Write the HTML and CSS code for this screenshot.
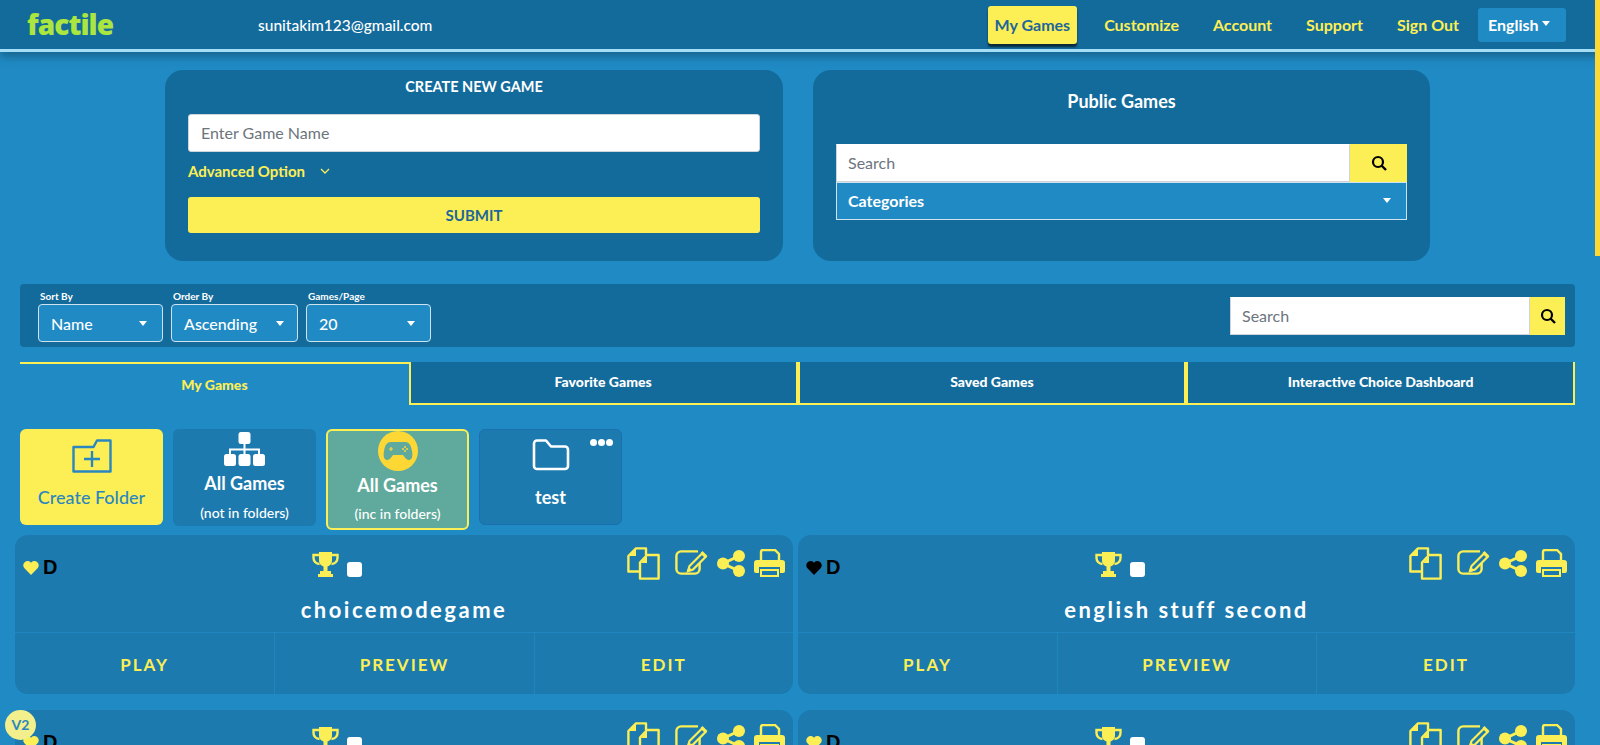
FILE: index.html
```html
<!DOCTYPE html>
<html lang="en">
<head>
    <meta charset="UTF-8">
    <meta name="viewport" content="width=device-width, initial-scale=1.0">
    <title>Factile - My Games</title>
    <link rel="stylesheet" href="styles.css">
</head>
<body>
    <svg class="icon-defs" aria-hidden="true">
        <symbol id="i-copy" viewBox="0 0 33 33">
            <path d="M19 8V1.400H9L1.400 9v15.500H12" fill="none" stroke="currentColor" stroke-width="2.400" stroke-linejoin="round"/>
            <path d="M9 2v7H2z" fill="currentColor"/>
            <path d="M31.600 8H20l-7 7.500v16.100h18.600z" fill="none" stroke="currentColor" stroke-width="2.400" stroke-linejoin="round"/>
            <path d="M20 9v7h-6z" fill="currentColor"/>
        </symbol>
        <symbol id="i-edit" viewBox="0 0 33 25">
            <path d="M23 1.400H6A4.600 4.600 0 0 0 1.400 6v13A4.600 4.600 0 0 0 6 23.600h14a4.600 4.600 0 0 0 4.600-4.600v-6" fill="none" stroke="currentColor" stroke-width="2.400"/>
            <path d="M27 3.500l3.500 3.500L18 19.500l-5 1.500 1.500-5z" fill="none" stroke="currentColor" stroke-width="2.200"/>
            <path d="M27.500 1l5 5-2 2-5-5zM12 22l1.500-5.500 4 4z" fill="currentColor"/>
        </symbol>
        <symbol id="i-share" viewBox="0 0 28 27">
            <circle cx="22" cy="6" r="6" fill="currentColor"/>
            <circle cx="6" cy="13.500" r="6" fill="currentColor"/>
            <circle cx="22" cy="21" r="6" fill="currentColor"/>
            <path d="M22 6L6 13.500 22 21" fill="none" stroke="currentColor" stroke-width="3"/>
        </symbol>
        <symbol id="i-print" viewBox="0 0 31 28">
            <path d="M7 13V3a2 2 0 0 1 2-2h12l4 4v8" fill="none" stroke="currentColor" stroke-width="2.400"/>
            <path d="M3 11h25a3 3 0 0 1 3 3v8a2 2 0 0 1-2 2h-3v-6H5v6H2a2 2 0 0 1-2-2v-8a3 3 0 0 1 3-3z" fill="currentColor"/>
            <path d="M7 21h17v6H7z" fill="none" stroke="currentColor" stroke-width="2"/>
        </symbol>
        <symbol id="i-trophy" viewBox="0 0 27 25">
            <path d="M7 0h13v8a6.500 6.500 0 0 1-4.500 6.500V19h3.500v3h2v3H6v-3h2v-3h3.500v-4.500A6.500 6.500 0 0 1 7 8z" fill="currentColor"/>
            <path d="M7 3H1.500v3a6 6 0 0 0 6 6M20 3h5.500v3a6 6 0 0 1-6 6" fill="none" stroke="currentColor" stroke-width="2.400"/>
        </symbol>
        <symbol id="i-heart" viewBox="0 0 16 15">
            <path d="M8 15L1.200 8A4.300 4.300 0 0 1 8 2.700 4.300 4.300 0 0 1 14.800 8z" fill="currentColor"/>
        </symbol>
        <symbol id="i-search" viewBox="0 0 16 16">
            <circle cx="7" cy="7" r="5" fill="none" stroke="currentColor" stroke-width="2.200"/>
            <path d="M10.500 10.500L15 15" stroke="currentColor" stroke-width="2.400"/>
        </symbol>
    </svg>

    <header class="navbar">
        <a class="logo">factile</a>
        <span class="nav-email">sunitakim123@gmail.com</span>
        <nav class="nav-links">
            <a class="nav-link active">My Games</a>
            <a class="nav-link">Customize</a>
            <a class="nav-link">Account</a>
            <a class="nav-link">Support</a>
            <a class="nav-link">Sign Out</a>
            <a class="lang-btn">English<span class="caret"></span></a>
        </nav>
    </header>

    <main class="content">
        <section class="top-panels">
            <div class="panel">
                <h2 class="panel-title create-title">CREATE NEW GAME</h2>
                <input class="game-name" type="text" placeholder="Enter Game Name">
                <div class="advanced">
                    <span>Advanced Option</span>
                    <svg width="10" height="6" viewBox="0 0 10 6"><path d="M1 1l4 4 4-4" fill="none" stroke="#fcef55" stroke-width="1.300"/></svg>
                </div>
                <button class="submit-btn">SUBMIT</button>
            </div>
            <div class="panel panel-right">
                <h2 class="panel-title public-title">Public Games</h2>
                <div class="search-row">
                    <input class="search-input" type="text" placeholder="Search">
                    <span class="search-btn"><svg width="16" height="16"><use href="#i-search"/></svg></span>
                </div>
                <div class="categories">Categories<span class="caret"></span></div>
            </div>
        </section>

        <section class="sort-bar">
            <div class="sort-field">
                <label class="sort-label">Sort By</label>
                <div class="sort-select w-name">Name<span class="caret"></span></div>
            </div>
            <div class="sort-field">
                <label class="sort-label">Order By</label>
                <div class="sort-select w-order">Ascending<span class="caret"></span></div>
            </div>
            <div class="sort-field">
                <label class="sort-label">Games/Page</label>
                <div class="sort-select w-name">20<span class="caret"></span></div>
            </div>
            <div class="search-row sort-search">
                <input class="search-input" type="text" placeholder="Search">
                <span class="search-btn small"><svg width="16" height="16"><use href="#i-search"/></svg></span>
            </div>
        </section>

        <section class="tabs">
            <div class="tab active">My Games</div>
            <div class="tab">Favorite Games</div>
            <div class="tab">Saved Games</div>
            <div class="tab">Interactive Choice Dashboard</div>
        </section>

        <section class="folders">
            <div class="folder create">
                <svg class="folder-icon" width="40" height="34" viewBox="0 0 40 34">
                    <path d="M1.500 8h20l3.500-6.500h13.500v31h-37z" fill="none" stroke="currentColor" stroke-width="2.400" stroke-linejoin="round"/>
                    <path d="M20 12v16M12 20h16" stroke="currentColor" stroke-width="2.400"/>
                </svg>
                <div class="folder-name">Create Folder</div>
            </div>
            <div class="folder">
                <svg class="tree-icon" width="41" height="34" viewBox="0 0 41 34">
                    <rect x="14.500" y="0" width="12" height="12" rx="2.500" fill="#fff"/>
                    <rect x="0" y="22" width="12" height="12" rx="2.500" fill="#fff"/>
                    <rect x="14.500" y="22" width="12" height="12" rx="2.500" fill="#fff"/>
                    <rect x="29" y="22" width="12" height="12" rx="2.500" fill="#fff"/>
                    <path d="M20.500 12v10M6 22v-4.500h29V22" fill="none" stroke="#fff" stroke-width="2"/>
                </svg>
                <div class="folder-name">All Games</div>
                <div class="folder-sub">(not in folders)</div>
            </div>
            <div class="folder selected">
                <span class="pad-badge">
                    <svg width="30" height="20" viewBox="0 0 30 20">
                        <path d="M8 1h14c4 0 6 3 7 9 1 5 0 9-3 9-2 0-4-2-6-5H10c-2 3-4 5-6 5-3 0-4-4-3-9C2 4 4 1 8 1z" fill="#5faa9c"/>
                        <path d="M6 8h4M8 6v4" stroke="#fdd835" stroke-width="1.200"/>
                        <circle cx="22" cy="6" r="1" fill="#fdd835"/><circle cx="22" cy="10" r="1" fill="#fdd835"/>
                        <circle cx="20" cy="8" r="1" fill="#fdd835"/><circle cx="24" cy="8" r="1" fill="#fdd835"/>
                    </svg>
                </span>
                <div class="folder-name">All Games</div>
                <div class="folder-sub">(inc in folders)</div>
            </div>
            <div class="folder plain">
                <span class="more-dots"><i></i><i></i><i></i></span>
                <svg class="folder-outline" width="38" height="32" viewBox="0 0 38 32">
                    <path d="M5 1.500h9l5 6h14a3 3 0 0 1 3 3V27a3 3 0 0 1-3 3H5a3 3 0 0 1-3-3V4.500a3 3 0 0 1 3-3z" fill="none" stroke="#fff" stroke-width="2.600" stroke-linejoin="round"/>
                </svg>
                <div class="folder-name">test</div>
            </div>
        </section>

        <section class="games">
            <article class="game">
                <div class="game-top">
                    <div class="game-fav"><svg class="heart on" width="16" height="15"><use href="#i-heart"/></svg><b>D</b></div>
                    <div class="game-mid"><svg width="27" height="25"><use href="#i-trophy"/></svg><span class="check"></span></div>
                    <div class="game-tools">
                        <svg class="t-copy" width="33" height="33"><use href="#i-copy"/></svg>
                        <svg class="t-edit" width="33" height="25"><use href="#i-edit"/></svg>
                        <svg class="t-share" width="28" height="27"><use href="#i-share"/></svg>
                        <svg class="t-print" width="31" height="28"><use href="#i-print"/></svg>
                    </div>
                </div>
                <h3 class="game-title">choicemodegame</h3>
                <div class="game-actions"><a>PLAY</a><a>PREVIEW</a><a>EDIT</a></div>
            </article>
            <article class="game">
                <div class="game-top">
                    <div class="game-fav"><svg class="heart" width="16" height="15"><use href="#i-heart"/></svg><b>D</b></div>
                    <div class="game-mid"><svg width="27" height="25"><use href="#i-trophy"/></svg><span class="check"></span></div>
                    <div class="game-tools">
                        <svg class="t-copy" width="33" height="33"><use href="#i-copy"/></svg>
                        <svg class="t-edit" width="33" height="25"><use href="#i-edit"/></svg>
                        <svg class="t-share" width="28" height="27"><use href="#i-share"/></svg>
                        <svg class="t-print" width="31" height="28"><use href="#i-print"/></svg>
                    </div>
                </div>
                <h3 class="game-title">english stuff second</h3>
                <div class="game-actions"><a>PLAY</a><a>PREVIEW</a><a>EDIT</a></div>
            </article>
            <article class="game">
                <div class="game-top">
                    <div class="game-fav"><svg class="heart on" width="16" height="15"><use href="#i-heart"/></svg><b>D</b></div>
                    <div class="game-mid"><svg width="27" height="25"><use href="#i-trophy"/></svg><span class="check"></span></div>
                    <div class="game-tools">
                        <svg class="t-copy" width="33" height="33"><use href="#i-copy"/></svg>
                        <svg class="t-edit" width="33" height="25"><use href="#i-edit"/></svg>
                        <svg class="t-share" width="28" height="27"><use href="#i-share"/></svg>
                        <svg class="t-print" width="31" height="28"><use href="#i-print"/></svg>
                    </div>
                </div>
            </article>
            <article class="game">
                <div class="game-top">
                    <div class="game-fav"><svg class="heart on" width="16" height="15"><use href="#i-heart"/></svg><b>D</b></div>
                    <div class="game-mid"><svg width="27" height="25"><use href="#i-trophy"/></svg><span class="check"></span></div>
                    <div class="game-tools">
                        <svg class="t-copy" width="33" height="33"><use href="#i-copy"/></svg>
                        <svg class="t-edit" width="33" height="25"><use href="#i-edit"/></svg>
                        <svg class="t-share" width="28" height="27"><use href="#i-share"/></svg>
                        <svg class="t-print" width="31" height="28"><use href="#i-print"/></svg>
                    </div>
                </div>
            </article>
        </section>
    </main>

    <div class="version">V2</div>
    <div class="scroll-thumb"></div>
</body>
</html>
```

FILE: styles.css
```css
* { box-sizing: border-box; }
html, body { height: 100%; overflow: hidden; }
body { margin: 0; background: #208ac4; color: #fff; font-family: Lato, "Open Sans", sans-serif; font-size: 15px; }
a { text-decoration: none; }
.icon-defs { position: absolute; width: 0; height: 0; }

.caret { display: inline-block; width: 0; height: 0; border-left: 4px solid transparent; border-right: 4px solid transparent; border-top: 5px solid #fff; }

/* navbar */
.navbar { display: flex; align-items: center; height: 52px; padding-right: 34px; background: #136b9b; border-bottom: 3px solid #a5dff7; box-shadow: 0 5px 8px rgba(19, 80, 110, 0.6); position: relative; }
.logo { width: 258px; padding-left: 27px; color: #abe53f; font-family: "Open Sans", sans-serif; font-size: 28px; font-weight: 800; line-height: 49px; letter-spacing: -0.9px; }
.nav-email { font-size: 15.5px; font-weight: 500; }
.nav-links { display: flex; align-items: center; margin-left: auto; }
.nav-link { padding: 0 7px; margin-right: 20px; height: 38px; line-height: 38px; color: #fcef55; font-size: 16px; font-weight: 700; border-radius: 3px; }
.nav-link.active { background: #fcef55; color: #1d669c; box-shadow: 0 3px 2px #0a2a3a; }
.lang-btn { display: flex; align-items: center; gap: 3px; width: 88px; height: 34px; padding-left: 10px; background: #208ac4; color: #fff; font-size: 16px; font-weight: 700; border-radius: 3px; margin-left: -8px; }
.lang-btn .caret { margin-top: -3px; }

/* main column leaves room for the scroll thumb */
.content { width: 1595px; }

.top-panels { display: flex; justify-content: center; gap: 30px; padding-top: 18px; }
.panel { width: 618px; height: 191px; padding: 0 23px; background: #136b9b; border-radius: 18px; }
.panel-right { width: 617px; }
.panel-title { margin: 0; text-align: center; font-weight: 700; }
.create-title { padding-top: 8px; font-size: 14.5px; line-height: 18px; }
.public-title { padding-top: 21px; padding-bottom: 33px; font-size: 18px; line-height: 20px; }
.game-name { display: block; width: 100%; height: 38px; margin-top: 18px; padding: 0 12px 2px; border: 1px solid #ced4da; border-radius: 3px; font: 16px Lato, sans-serif; background: #fff; }
input::placeholder { color: #6c757d; opacity: 1; }
.advanced { display: flex; align-items: center; gap: 15px; height: 20px; margin-top: 9px; color: #fcef55; font-weight: 700; }
.submit-btn { display: block; width: 100%; height: 36px; margin-top: 16px; border: 0; border-radius: 3px; background: #fcef55; color: #1d669c; font: 700 15px Lato, sans-serif; }

.search-row { display: flex; height: 38px; }
.search-input { flex: 1; min-width: 0; padding: 0 11px 2px; border: 1px solid #ced4da; border-top-color: #fff; background: #fff; font: 16px Lato, sans-serif; }
.search-btn { display: flex; align-items: center; justify-content: center; width: 57px; background: #fcef55; color: #000; }
.search-btn.small { width: 35px; }
.categories { display: flex; align-items: center; justify-content: space-between; height: 38px; padding: 0 15px 2px 11px; border: 1px solid #cfe3ef; background: #208ac4; font-size: 16px; font-weight: 700; }

.sort-bar { display: flex; align-items: flex-end; gap: 8px; height: 63px; margin: 23px 20px 0; padding: 0 10px 5px 18px; background: #136b9b; border-radius: 4px; }
.sort-label { display: block; height: 12px; margin-left: 2px; font-size: 10px; line-height: 11px; font-weight: 700; }
.sort-select { display: flex; align-items: center; justify-content: space-between; height: 38px; padding: 0 15px 0 12px; margin-top: 1px; background: #208ac4; border: 1px solid #cfe3ef; border-radius: 4px; font-size: 16px; font-weight: 500; }
.w-name { width: 125px; }
.w-order { width: 127px; padding-right: 13px; }
.sort-search { width: 335px; margin-left: auto; margin-bottom: 7px; }

.tabs { display: grid; grid-template-columns: repeat(4, 1fr); height: 43px; margin: 15px 20px 0; }
.tab { display: flex; align-items: center; justify-content: center; padding-bottom: 2px; background: #136b9b; border-left: 2px solid #fcef55; border-right: 2px solid #fcef55; border-bottom: 2px solid #fcef55; font-size: 14px; font-weight: 900; }
.tab.active { background: transparent; color: #fcef55; border: 0; border-top: 2px solid #fcef55; padding: 0; }

.folders { display: flex; gap: 10px; align-items: flex-start; margin: 24px 20px 0; }
.folder { position: relative; display: flex; flex-direction: column; align-items: center; width: 143px; height: 97px; padding-top: 3px; background: #1c7aae; border-radius: 6px; }
.folder.create { background: #fcef55; color: #2a86c0; height: 96px; padding-top: 10px; }
.folder.selected { height: 101px; padding-top: 0; background: #5faa9c; border: 2px solid #fcef55; }
.folder.plain { height: 96px; padding-top: 9px; border: 1px solid #1b6fb0; }
.folder-name { font-size: 18px; font-weight: 700; line-height: 20px; }
.create .folder-name { margin-top: 14px; font-weight: 500; }
.tree-icon { margin-bottom: 7px; }
.folder-sub { margin-top: 11px; font-size: 14px; font-weight: 500; line-height: 17px; }
.selected .folder-sub { margin-top: 10px; }
.pad-badge { display: flex; align-items: center; justify-content: center; width: 40px; height: 40px; margin-bottom: 4px; border-radius: 50%; background: #fdd835; }
.more-dots { position: absolute; top: 9px; right: 8px; display: flex; gap: 1px; }
.more-dots i { width: 7px; height: 7px; border-radius: 50%; background: #fff; }
.plain .folder-name { margin-top: 16px; }

.games { display: grid; grid-template-columns: 778px 777px; gap: 16px 5px; margin: 5px 0 0 15px; }
.game { height: 159px; background: #1c7aae; border-radius: 13px; }
.game-top { display: grid; grid-template-columns: 289px auto 1fr; align-items: start; height: 63px; padding: 0 8px; color: #fcef55; }
.game-fav { display: flex; align-items: center; gap: 4px; margin-top: 22px; }
.heart { color: #000; }
.heart.on { color: #fcef55; }
.game-fav b { color: #000; font-size: 20px; line-height: 20px; font-family: "Liberation Sans", sans-serif; }
.game-mid { display: flex; align-items: flex-end; gap: 8px; padding-top: 17px; }
.check { width: 15px; height: 15px; background: #fff; border-radius: 3px; }
.game-tools { display: flex; align-items: flex-start; justify-content: flex-end; gap: 9px; padding-top: 12px; }
.t-copy { margin-right: 6px; }
.t-edit, .t-share { margin-top: 3px; }
.t-print { margin-top: 2px; }
.game-title { height: 35px; margin: 0; text-align: center; font-size: 22px; font-weight: 700; line-height: 24px; letter-spacing: 2.5px; border-bottom: 1px solid #1f86be; }
.game-actions { display: grid; grid-template-columns: repeat(3, 1fr); height: 61px; }
.game-actions a { display: flex; align-items: center; justify-content: center; padding-top: 2px; color: #fcef55; font-size: 17px; font-weight: 700; letter-spacing: 2px; border-left: 1px solid #1f86be; }
.game-actions a:first-child { border-left: 0; }

.version { position: fixed; left: 5px; bottom: 5px; width: 31px; height: 30px; border-radius: 50%; background: #f3ef8c; color: #2a86c0; font-size: 14px; font-weight: 700; line-height: 30px; text-align: center; }
.scroll-thumb { position: fixed; top: 0; right: 0; width: 5px; height: 256px; background: #fcd835; }
```
